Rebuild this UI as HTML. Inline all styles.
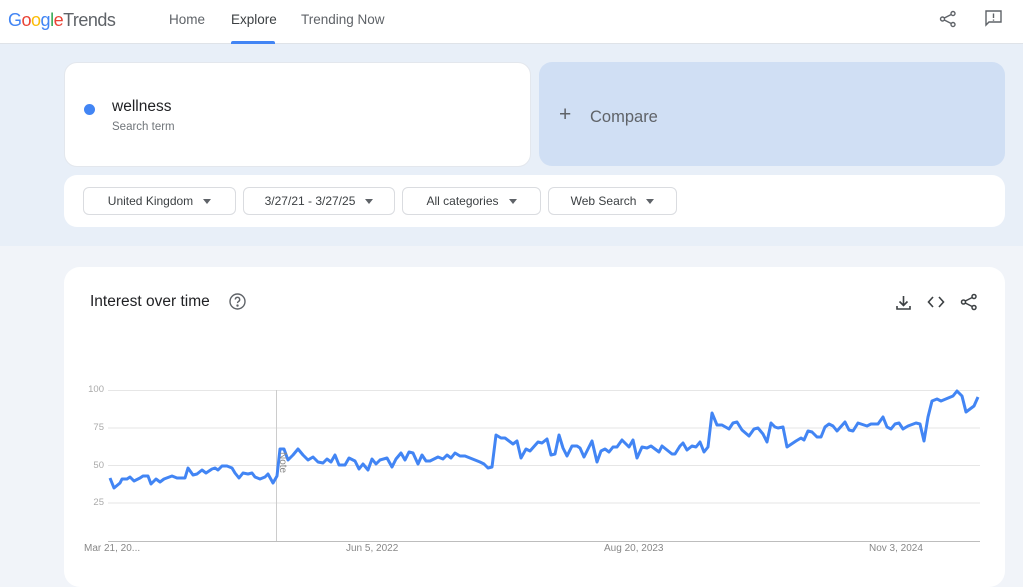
<!DOCTYPE html>
<html><head><meta charset="utf-8"><style>
*{margin:0;padding:0;box-sizing:border-box}
body{width:1023px;height:568px;overflow:hidden;font-family:"Liberation Sans",Arial,sans-serif;background:#f1f4f9;position:relative;color:#202124}
.hdr{position:absolute;left:0;top:0;width:1023px;height:44px;background:#fff;border-bottom:1px solid #dfe3e8}
.logo{position:absolute;left:8px;top:10px;font-size:18px;letter-spacing:-0.5px}
.nav{position:absolute;top:12px;font-size:13.5px;color:#5f6368}
.band{position:absolute;left:0;top:44px;width:1023px;height:202px;background:#e8eff8}
.card{position:absolute;background:#fff;border-radius:13px}
.btn{position:absolute;top:187px;height:28px;border:1px solid #dadce0;border-radius:6px;background:#fff;font-size:12px;color:#3c4043;display:flex;align-items:center;justify-content:center;gap:10px}
.tri{width:0;height:0;border-left:4.5px solid transparent;border-right:4.5px solid transparent;border-top:5px solid #5f6368}
.yl{position:absolute;left:84px;width:20px;text-align:right;font-size:9.5px;color:#aaa}
.xl{position:absolute;top:543px;font-size:10px;color:#888}
</style></head><body>
<div class="hdr">
<div class="logo"><span style="color:#4285f4">G</span><span style="color:#ea4335">o</span><span style="color:#fbbc05">o</span><span style="color:#4285f4">g</span><span style="color:#34a853">l</span><span style="color:#ea4335">e</span><span style="color:#5f6368">Trends</span></div>
<div class="nav" style="left:169px">Home</div>
<div class="nav" style="left:231px;color:#3c4043">Explore</div>
<div style="position:absolute;left:231px;top:41px;width:44px;height:3px;background:#4285f4;border-radius:2px 2px 0 0"></div>
<div class="nav" style="left:301px">Trending Now</div>
<svg style="position:absolute;left:939px;top:10px" width="18" height="18" viewBox="0 0 18 18" fill="none" stroke="#5f6368" stroke-width="1.4"><circle cx="14" cy="3.5" r="2"/><circle cx="3.5" cy="9" r="2"/><circle cx="14" cy="14.5" r="2"/><path d="M5.3 8 12.2 4.5M5.3 10 12.2 13.5"/></svg>
<svg style="position:absolute;left:984px;top:9px" width="19" height="18" viewBox="0 0 19 18" fill="none" stroke="#5f6368" stroke-width="1.4"><path d="M2 2h15v11H5l-3 3z"/><path d="M9.5 4.5v4.5M9.5 10.5v1.2"/></svg>
</div>
<div class="band"></div>
<div class="card" style="left:64px;top:62px;width:467px;height:105px;border:1px solid #e3e7ed">
<div style="position:absolute;left:19px;top:41px;width:11px;height:11px;border-radius:50%;background:#4285f4"></div>
<div style="position:absolute;left:47px;top:35px;font-size:15.5px">wellness</div>
<div style="position:absolute;left:47px;top:58px;font-size:11.5px;color:#70757a">Search term</div>
</div>
<div class="card" style="left:539px;top:62px;width:466px;height:104px;background:#d0dff4">
<div style="position:absolute;left:20px;top:41px;font-size:21px;color:#5f6368;font-weight:300">+</div>
<div style="position:absolute;left:51px;top:46px;font-size:16.5px;color:#5f6368">Compare</div>
</div>
<div class="card" style="left:64px;top:175px;width:941px;height:52px"></div>
<div class="btn" style="left:83px;width:153px">United Kingdom <span class="tri"></span></div>
<div class="btn" style="left:243px;width:152px">3/27/21 - 3/27/25 <span class="tri"></span></div>
<div class="btn" style="left:402px;width:139px">All categories <span class="tri"></span></div>
<div class="btn" style="left:548px;width:129px">Web Search <span class="tri"></span></div>

<div class="card" style="left:64px;top:267px;width:941px;height:320px;border-radius:16px"></div>
<div style="position:absolute;left:90px;top:293px;font-size:15.5px;color:#202124">Interest over time</div>
<svg style="position:absolute;left:228px;top:292px" width="19" height="19" viewBox="0 0 19 19" fill="none" stroke="#5f6368" stroke-width="1.4"><circle cx="9.5" cy="9.5" r="7.5"/><path d="M7.3 7.5a2.2 2.2 0 1 1 3.2 2c-.7.4-1 .8-1 1.6"/><circle cx="9.5" cy="13.6" r=".5" fill="#5f6368"/></svg>
<svg style="position:absolute;left:895px;top:294px" width="17" height="17" viewBox="0 0 17 17" fill="none" stroke="#3c4043" stroke-width="1.6"><path d="M8.5 2v9M4.5 7.5l4 4 4-4M2 12v3h13v-3"/></svg>
<svg style="position:absolute;left:927px;top:294px" width="18" height="16" viewBox="0 0 18 16" fill="none" stroke="#3c4043" stroke-width="1.6"><path d="M6 3 1.5 8 6 13M12 3l4.5 5L12 13"/></svg>
<svg style="position:absolute;left:960px;top:293px" width="18" height="18" viewBox="0 0 18 18" fill="none" stroke="#3c4043" stroke-width="1.5"><circle cx="14" cy="3.5" r="2"/><circle cx="3.5" cy="9" r="2"/><circle cx="14" cy="14.5" r="2"/><path d="M5.3 8 12.2 4.5M5.3 10 12.2 13.5"/></svg>

<div class="yl" style="top:384px">100</div>
<div class="yl" style="top:422px">75</div>
<div class="yl" style="top:460px">50</div>
<div class="yl" style="top:497px">25</div>
<svg style="position:absolute;left:0;top:0" width="1023" height="568">
<g stroke="#e6e6e6" stroke-width="1"><path d="M108 390.5H980M108 428H980M108 465.5H980M108 503H980"/></g>
<path d="M108 541.5H980" stroke="#bdbdbd"/>
<path d="M276.5 390V541" stroke="#ccc"/>
<polyline fill="none" stroke="#4285f4" stroke-width="3" stroke-linejoin="round" points="110,478 114,488 120,483 122,479 127,479 130,477 134,481 140,478 143,476 148,476 151,484 156,479 160,482 164,479 172,476 177,478 185,478 188,468 193,475 197,474 202,470 206,473 212,469 215,468 218,470 222,466 227,466 232,468 235,473 239,478 243,473 248,474 252,473 255,477 260,479 265,477 268,474 273,483 277,476 280,449 284,449 288,460 293,455 298,449 303,455 308,460 313,457 318,462 323,463 327,459 331,462 335,455 339,465 345,465 349,458 355,461 359,469 363,464 368,470 372,459 376,464 380,460 387,458 392,467 396,459 401,453 405,460 409,452 413,453 418,464 422,455 426,461 430,461 434,459 438,457 443,459 447,455 451,458 455,453 460,456 465,456 470,458 480,462 484,464 488,468 492,467 496,435 501,438 505,438 513,444 517,441 521,458 526,449 530,451 538,442 542,443 547,439 551,455 555,454 559,435 563,448 567,456 572,446 577,446 580,448 584,457 592,441 597,462 601,451 605,449 609,452 613,447 617,447 622,440 629,447 633,440 637,458 642,447 647,448 651,446 659,452 662,446 672,454 675,454 680,446 683,443 687,450 692,446 696,447 700,442 704,452 708,447 712,413 717,425 722,425 729,429 733,423 737,422 742,430 749,436 754,429 758,428 763,434 767,442 771,423 775,427 778,428 783,427 787,447 796,441 801,438 804,440 808,431 812,432 817,437 821,437 825,427 829,424 833,426 837,431 845,422 849,430 853,431 858,423 867,426 871,424 878,424 883,417 887,427 891,429 895,424 899,423 903,429 908,426 916,423 920,424 924,441 928,417 932,401 937,399 941,401 953,396 957,391 962,396 966,412 974,406 978,397"/>
<text x="280" y="452" transform="rotate(90 280 452)" font-family="Liberation Sans" font-size="10" fill="#888">Note</text>
</svg>
<div class="xl" style="left:84px">Mar 21, 20...</div>
<div class="xl" style="left:346px">Jun 5, 2022</div>
<div class="xl" style="left:604px">Aug 20, 2023</div>
<div class="xl" style="left:869px">Nov 3, 2024</div>
</body></html>
